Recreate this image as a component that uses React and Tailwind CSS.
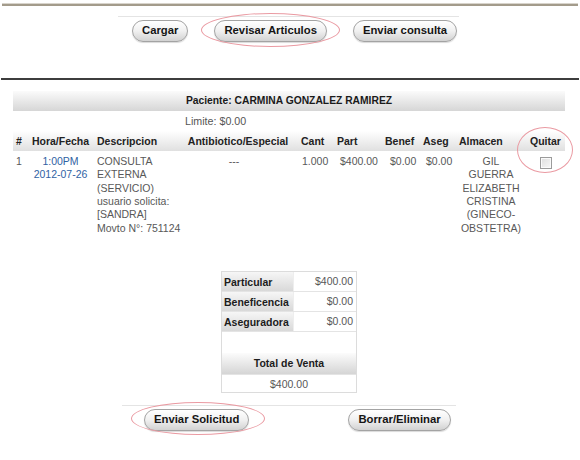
import React from "react";

const F = "font-['Liberation_Sans',Arial,sans-serif]";

function Btn({ children }) {
  return (
    <div className="h-[22px] px-[9px] rounded-full border border-[#a3a3a3] bg-gradient-to-b from-[#ffffff] via-[#f0f0f0] to-[#d2d2d2] shadow-[0_1px_1px_rgba(0,0,0,0.15)] flex items-center text-[11.3px] font-bold text-[#151515] whitespace-nowrap leading-none">
      {children}
    </div>
  );
}

function Ellipse({ className }) {
  return <div className={"absolute rounded-[50%] border border-[#ea9aa2] pointer-events-none " + className} />;
}

const HEAD =
  "h-[20px] leading-[20px] text-[10.5px] font-bold text-[#222] whitespace-nowrap";

export default function App() {
  return (
    <div className={`w-[580px] h-[460px] bg-white relative overflow-hidden flex flex-col ${F}`}>
      {/* top border */}
      <div className="pt-[3px] px-[2px]">
        <div className="h-px bg-[#d8d4cc]" />
        <div className="h-[2px] bg-[#a39b8b]" />
      </div>

      {/* toolbar */}
      <div className="h-[72px] flex flex-col shrink-0">
        <div className="mt-[10px] ml-[118px] w-[341px] h-px bg-[#e4e4e4]" />
        <div className="mt-[3px] ml-[132px] flex gap-[26px]">
          <Btn>Cargar</Btn>
          <Btn>Revisar Articulos</Btn>
          <Btn>Enviar consulta</Btn>
        </div>
      </div>
      <div className="mx-[1px] h-[2px] bg-[#3d3d3d] shrink-0" />

      {/* main */}
      <div className="px-[13px] pt-[11px] w-[578px]">
        <div className="h-[20px] leading-[20px] bg-gradient-to-b from-[#fbfbfb] to-[#d6d6d6] text-center text-[10.3px] font-bold text-[#1a1a1a]">
          Paciente: CARMINA GONZALEZ RAMIREZ
        </div>
        <div className="h-[20px] leading-[21px] pl-[172px] text-[10.7px] text-[#555]">
          Limite: $0.00
        </div>

        {/* header row */}
        <div className="flex bg-gradient-to-b from-[#ffffff] to-[#e0e0e0]">
          <div className={`${HEAD} w-[15px] pl-[3px]`}>#</div>
          <div className={`${HEAD} w-[65px] text-center`}>Hora/Fecha</div>
          <div className={`${HEAD} w-[92px] pl-[4px]`}>Descripcion</div>
          <div className={`${HEAD} w-[106px] text-center`}>Antibiotico/Especial</div>
          <div className={`${HEAD} w-[44px] pl-[10px]`}>Cant</div>
          <div className={`${HEAD} w-[48px] pl-[2px]`}>Part</div>
          <div className={`${HEAD} w-[38px] pl-[2px]`}>Benef</div>
          <div className={`${HEAD} w-[35px] pl-[2px]`}>Aseg</div>
          <div className={`${HEAD} w-[70px] pl-[3px]`}>Almacen</div>
          <div className={`${HEAD} w-[39px] text-center`}>Quitar</div>
        </div>

        {/* data row */}
        <div className="flex pt-[4px] text-[10.5px] leading-[13.33px] text-[#585858]">
          <div className="w-[15px] pl-[3px]">1</div>
          <div className="w-[65px] text-center text-[#2f62a3]">
            <div>1:00PM</div>
            <div>2012-07-26</div>
          </div>
          <div className="w-[92px] pl-[4px] whitespace-nowrap">
            <div>CONSULTA</div>
            <div>EXTERNA</div>
            <div>(SERVICIO)</div>
            <div>usuario solicita:</div>
            <div>[SANDRA]</div>
            <div>Movto N°: 751124</div>
          </div>
          <div className="w-[106px] text-center pr-[8px]">---</div>
          <div className="w-[44px] pl-[11px]">1.000</div>
          <div className="w-[48px] pl-[5px]">$400.00</div>
          <div className="w-[38px] pl-[7px]">$0.00</div>
          <div className="w-[35px] pl-[5px]">$0.00</div>
          <div className="w-[70px] text-center whitespace-nowrap">
            <div>GIL</div>
            <div>GUERRA</div>
            <div>ELIZABETH</div>
            <div>CRISTINA</div>
            <div>(GINECO-</div>
            <div>OBSTETRA)</div>
          </div>
          <div className="w-[39px] flex justify-center pt-[2px] pl-[1px]">
            <div className="w-[12px] h-[12px] border border-[#9b9b9b] bg-gradient-to-br from-[#dedede] to-[#f7f7f7] shadow-[inset_0_0_0_1px_#fafafa]" />
          </div>
        </div>
      </div>

      {/* summary */}
      <div className="mt-[36px] ml-[221px] w-[136px] border border-[#dcdcdc] text-[10.5px]">
        {[
          ["Particular", "$400.00"],
          ["Beneficencia", "$0.00"],
          ["Aseguradora", "$0.00"],
        ].map(([l, v]) => (
          <div key={l} className="flex h-[20px] border-b border-[#e4e4e4]">
            <div className="w-[72px] pl-[2px] leading-[20px] font-bold text-[#1c1c1c] bg-gradient-to-b from-[#f6f6f6] to-[#d9d9d9] border-r border-[#eeeeee]">
              {l}
            </div>
            <div className="flex-1 text-right pr-[3px] leading-[18px] text-[#585858]">{v}</div>
          </div>
        ))}
        <div className="h-[21px]" />
        <div className="h-[21px] leading-[21px] text-center font-bold text-[#1c1c1c] bg-gradient-to-b from-[#fcfcfc] to-[#d5d5d5]">
          Total de Venta
        </div>
        <div className="h-[18px] leading-[18px] text-center text-[#585858] border-t border-[#e4e4e4]">
          $400.00
        </div>
      </div>

      {/* bottom */}
      <div className="mt-[12px] ml-[122px] w-[334px] h-px bg-[#e4e4e4] shrink-0" />
      <div className="mt-[3px] ml-[144px] flex gap-[99px]">
        <Btn>Enviar Solicitud</Btn>
        <Btn>Borrar/Eliminar</Btn>
      </div>

      {/* annotations */}
      <Ellipse className="left-[201px] top-[13px] w-[139px] h-[34px]" />
      <Ellipse className="left-[517px] top-[127px] w-[56px] h-[46px]" />
      <Ellipse className="left-[131px] top-[402px] w-[134px] h-[33px]" />
    </div>
  );
}
